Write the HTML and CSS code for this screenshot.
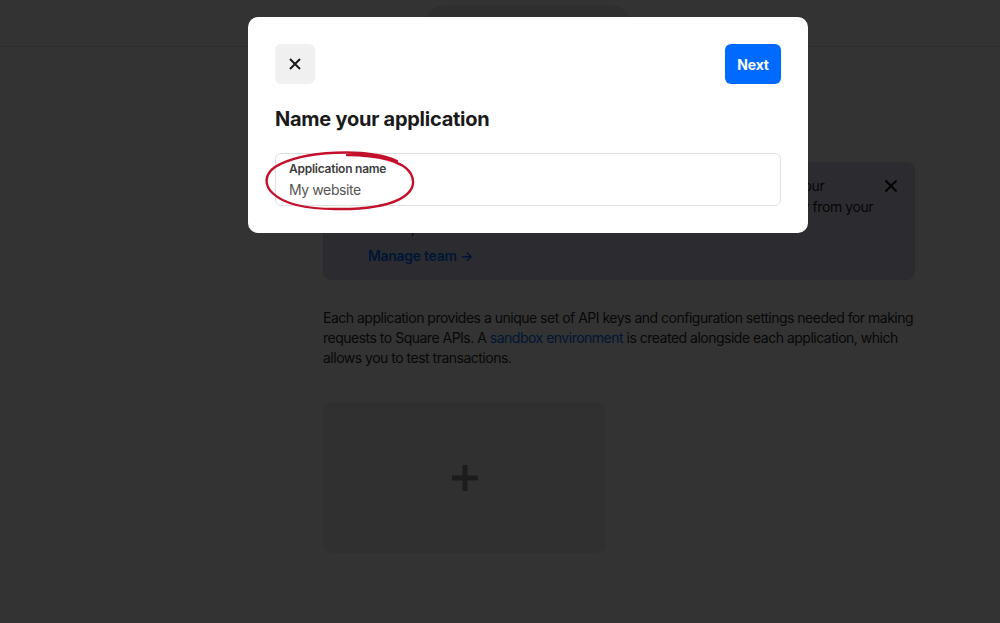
FILE: index.html
```html
<!DOCTYPE html>
<html lang="en">
<head>
<meta charset="utf-8">
<title>Name your application</title>
<link rel="stylesheet" href="styles.css">
</head>
<body>
<div class="page">
  <header class="topbar">
    <div class="pill"></div>
  </header>
  <main class="content">
    <section class="banner">
      <div class="banner-text">
        <span class="line line-first">Invite other developers to join your team so they can collaborate on your</span>
        <span class="line">applications. You can add, remove and manage team members directly from your</span>
        <span class="line">Developer Dashboard.</span>
      </div>
      <a class="banner-link" href="#">Manage team →</a>
      <svg class="banner-close" width="14" height="14" viewBox="0 0 14 14"><path d="M1.5 1.5L12.5 12.5M12.5 1.5L1.5 12.5" stroke="#000" stroke-width="1.8" fill="none"/></svg>
    </section>
    <p class="intro">Each application provides a unique set of API keys and configuration settings needed for making requests to Square APIs. A <a href="#">sandbox environment</a> is created alongside each application, which allows you to test transactions.</p>
    <div class="new-card">
      <svg width="30" height="30" viewBox="0 0 30 30"><path d="M15 2V28M2 15H28" stroke="#8a8a8a" stroke-width="5" fill="none"/></svg>
    </div>
  </main>
</div>
<div class="overlay"></div>
<div class="modal">
  <div class="modal-head">
    <button class="btn-close" aria-label="Close">
      <svg width="14" height="14" viewBox="0 0 14 14"><path d="M2 2L12 12M12 2L2 12" stroke="#1a1a1a" stroke-width="2" fill="none"/></svg>
    </button>
    <button class="btn-next">Next</button>
  </div>
  <h2 class="modal-title">Name your application</h2>
  <div class="field">
    <label class="field-label">Application name</label>
    <div class="field-value">My website</div>
    <svg class="circle" width="160" height="66" viewBox="0 0 160 66"><path d="M134 11 C 104 -2, 40 0, 12 17 C -8 31, 6 59, 72 59 C 132 60, 158 44, 148 24 C 141 11, 114 5, 84 5" stroke="#c3112c" stroke-width="2.4" fill="none" stroke-linecap="round"/></svg>
  </div>
</div>
</body>
</html>
```

FILE: styles.css
```css
* { box-sizing: border-box; }
html, body { margin: 0; padding: 0; }
body {
  width: 1000px;
  height: 623px;
  overflow: hidden;
  background: #ffffff;
  font-family: Inter, "Liberation Sans", sans-serif;
  color: #1a1a1a;
  position: relative;
}
.page { width: 1000px; height: 623px; }
.topbar {
  height: 47px;
  border-bottom: 1px solid #e6e6e6;
  display: flex;
  justify-content: center;
  padding-top: 5px;
}
.pill {
  width: 206px;
  height: 40px;
  margin-left: 56px;
  border-radius: 20px;
  background: #eaeaea;
}
.content {
  margin-left: 323px;
  width: 592px;
  padding-top: 115px;
}
.banner {
  position: relative;
  background: #d9dcef;
  border-radius: 8px;
  padding: 13px 45px 14px 45px;
  height: 118px;
}
.banner-text { font-size: 14px; line-height: 21px; color: #1a1a1a; letter-spacing: -0.42px; }
.line { display: block; white-space: nowrap; }
.line-first { letter-spacing: -0.3px; }
.banner-link {
  display: block;
  margin-top: 8px;
  font-size: 14px;
  line-height: 20px;
  font-weight: 600;
  letter-spacing: -0.3px;
  color: #006aff;
  text-decoration: none;
}
.banner-close { position: absolute; right: 17px; top: 17px; }
.intro {
  margin: 28px 0 0 0;
  font-size: 14px;
  line-height: 20px;
  letter-spacing: -0.5px;
  color: #2a2a2a;
}
.intro a { color: #006aff; text-decoration: none; }
.new-card {
  margin-top: 35px;
  width: 283px;
  height: 150px;
  border-radius: 8px;
  background: #f0f0f0;
  display: flex;
  align-items: center;
  justify-content: center;
}
.overlay {
  position: absolute;
  inset: 0;
  background: rgba(0, 0, 0, 0.8);
}
.modal {
  position: absolute;
  left: 248px;
  top: 17px;
  width: 560px;
  height: 216px;
  background: #ffffff;
  border-radius: 10px;
  padding: 27px;
}
.modal-head {
  display: flex;
  justify-content: space-between;
  align-items: center;
}
.btn-close {
  width: 40px;
  height: 40px;
  border: none;
  border-radius: 6px;
  background: #f0f0f0;
  display: flex;
  align-items: center;
  justify-content: center;
  padding: 0;
}
.btn-next {
  width: 56px;
  height: 40px;
  border: none;
  border-radius: 6px;
  background: #006aff;
  color: #ffffff;
  font-family: Inter, "Liberation Sans", sans-serif;
  font-size: 14px;
  font-weight: 700;
  letter-spacing: -0.2px;
  padding: 0;
}
.modal-title {
  margin: 21px 0 0 0;
  font-size: 20px;
  line-height: 28px;
  font-weight: 700;
  color: #1a1a1a;
  letter-spacing: -0.25px;
}
.field {
  position: relative;
  margin-top: 20px;
  height: 53px;
  border: 1px solid #e0e0e0;
  border-radius: 6px;
  padding: 7px 13px;
}
.field-label {
  display: block;
  font-size: 12px;
  line-height: 16px;
  font-weight: 600;
  letter-spacing: -0.25px;
  color: #3d3d3d;
}
.field-value {
  font-size: 14px;
  line-height: 20px;
  letter-spacing: -0.4px;
  color: #555555;
  margin-top: 3px;
}
.circle {
  position: absolute;
  left: -13px;
  top: -4px;
}
```
